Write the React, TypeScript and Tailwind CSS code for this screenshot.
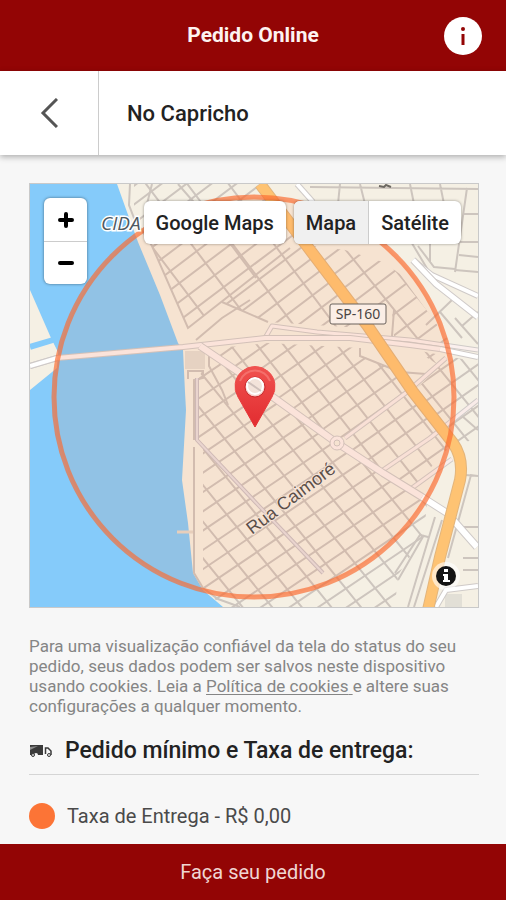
interface StreetLinesProps {
  clip: string;
  angle: number;
  spacing: number;
  offset?: number;
}

/**
 * Parallel side streets, clipped to one neighbourhood
 */
function StreetLines({ clip, angle, spacing, offset = 0 }: StreetLinesProps) {
  const lines = [];
  for (let y = -320; y <= 320; y += spacing) {
    lines.push(`M-400 ${y + offset}H400`);
  }
  return (
    <g clipPath={`url(#${clip})`}>
      <path d={lines.join('')} transform={`translate(300 400) rotate(${angle})`} />
    </g>
  );
}

interface RoadProps {
  d: string;
  width: number;
  casing?: string;
  fill?: string;
}

function Road({ d, width, casing = '#cfcac8', fill = '#ffffff' }: RoadProps) {
  return (
    <g fill="none" strokeLinejoin="round">
      <path d={d} stroke={casing} strokeWidth={width + 2} />
      <path d={d} stroke={fill} strokeWidth={width} />
    </g>
  );
}

function MapCanvas() {
  return (
    <svg
      viewBox="30 184 448 423"
      preserveAspectRatio="xMidYMid slice"
      className="block w-full"
      aria-label="Área de entrega"
      role="img"
    >
      <defs>
        <clipPath id="north">
          <path d="M134 184H262L307 248L362 328L268 322L222 302L188 328L152 246L134 212Z" />
        </clipPath>
        <clipPath id="east">
          <path d="M307 245L345 250L383 262L400 274L452 345L394 336L392 310L374 326Z" />
        </clipPath>
        <clipPath id="center">
          <path d="M268 343L360 348L362 356L400 372L453 443L412 488L383 471L337 443L277 401L210 349Z" />
        </clipPath>
        <clipPath id="south">
          <path d="M210 352L240 374L277 401L337 443L383 473L427 502L424 535L398 575L395 607H225L203 590V440L198 440V380Z" />
        </clipPath>
        <clipPath id="farEast">
          <path d="M415 350L478 362V440L453 443L413 392L440 366Z" />
        </clipPath>
        <linearGradient id="pin" x1="0" y1="0" x2="0" y2="1">
          <stop offset="0" stopColor="#f0524f" />
          <stop offset="1" stopColor="#e22c30" />
        </linearGradient>
      </defs>

      {/* Land and river */}
      <rect x="30" y="184" width="448" height="423" fill="#f5f0e4" />
      <path
        d="M30 184H117L127 212L138 242L160 295L175 335L178 343L183 350L185 392L186 410L182 480L188 523L193 573L203 590L223 607H30V390L57 368L58 352L51 338L30 290Z"
        fill="#85cbfa"
      />
      <path d="M30 347L53 340" stroke="#85cbfa" strokeWidth="6" />
      <path d="M177 532H194" stroke="#e5d8cb" strokeWidth="3" />

      {/* Blocks around the highway exits */}
      <path d="M415 264L432 273L442 288L436 289Z" fill="#dfe1df" />
      <path d="M185 351H205V369H185Z" fill="#e4ddd3" />
      <path d="M445 594H462V607H445Z" fill="#e2dfd6" />

      <g fill="none" stroke="#cdc5be" strokeWidth="2">
        <StreetLines clip="north" angle={-37} spacing={15} offset={4} />
        <StreetLines clip="north" angle={53} spacing={33} offset={16} />
        <StreetLines clip="east" angle={-37} spacing={17} offset={2} />
        <StreetLines clip="east" angle={51} spacing={26} offset={8} />
        <StreetLines clip="center" angle={-35} spacing={17} offset={0} />
        <StreetLines clip="center" angle={52} spacing={21} offset={5} />
        <StreetLines clip="south" angle={-34} spacing={16} offset={6} />
        <StreetLines clip="south" angle={51} spacing={23} offset={12} />
        <StreetLines clip="farEast" angle={-35} spacing={17} offset={2} />
        <StreetLines clip="farEast" angle={51} spacing={23} offset={8} />

        {/* Streets along the shore */}
        <path d="M130 184L129 205L134 218L152 246L188 328L290 248" />
        <path d="M152 184L146 208M178 184L232 246L256 278M196 340L222 318L250 300" />
        <path d="M222 302L268 322M360 348V356L400 372L426 374M394 310L392 336" />
        <path d="M194 447V573L203 588L218 599L240 607" />
        <path d="M188 379V371H203V378L194 380V440M209 350V366L222 390L228 405" />

        {/* North east blocks */}
        <path d="M310 187L478 189M340 184L338 204M360 184L365 204M410 184L414 204M440 184L444 204M467 188L455 272" />
        <path d="M463 214H478M460 242H478M459 255L478 257M455 270L478 272M418 246L434 267L455 269M430 244V262M410 240L428 270" />
        <path d="M426 325L452 300M440 312L462 338M455 318L478 344M462 326L478 312" />

        {/* South east blocks */}
        <path d="M478 430L462 416M465 475L478 476L471 475L448 558M463 527H478M463 558H478M463 570H478" />
        <path d="M435 517L408 607M442 520L414 607M424 535L398 580M395 573L420 535L428 537M427 500L445 512" />
      </g>

      {/* Secondary roads */}
      <Road d="M197 378V440L260 507L323 573" width={2} casing="#c9c0c4" fill="#e7dfe0" />
      <Road d="M297 184L313 202" width={4} />
      <Road d="M413 260L432 275L478 296" width={4} />
      <Road d="M413 260L436 284L478 317" width={5} />
      <Road d="M345 438L407 392L446 358" width={3} fill="#f9ece9" />
      <Road d="M383 470L430 438L478 400" width={3} fill="#f9ece9" />
      <Road d="M412 488L452 459" width={3} fill="#f9ece9" />
      <Road d="M436 607L446 590L478 586" width={4} />
      <Road d="M265 338L272 326L317 332L410 340L478 350" width={3} fill="#fbf0ee" />
      <Road d="M30 366L57 358L183 347L265 338L350 338L410 345L440 349" width={4} fill="#fbf0ee" />
      <Road d="M440 349L478 357" width={4} />
      <Road d="M30 366L57 358" width={4} />
      <Road d="M200 346L240 373L277 400L337 443L383 473L422 497" width={6} fill="#fbf0ee" />
      <Road d="M422 497L447 513L477 547" width={6} />
      <circle cx="337" cy="443" r="7" fill="#fbf0ee" stroke="#cfcac8" />
      <circle cx="337" cy="443" r="3" fill="#f5f0e4" stroke="#cfcac8" />

      {/* Highway */}
      <Road
        d="M260 184L307 246L367 325L413 392L453 443Q464 459 460 480L440 557L428 610"
        width={10}
        casing="#e3b57c"
        fill="#fec373"
      />
      <path d="M379 186L384 187L386 185L391 187" fill="none" stroke="#6b6761" strokeWidth="2" />

      {/* Delivery radius */}
      <circle
        cx="254"
        cy="397"
        r="200"
        fill="#fb7535"
        fillOpacity=".1"
        stroke="#fb6c31"
        strokeOpacity=".68"
        strokeWidth="5"
      />

      {/* Labels */}
      <text
        x="101"
        y="230"
        fontSize="19"
        fontStyle="italic"
        fill="#4f5961"
        stroke="#fff"
        strokeWidth="3"
        paintOrder="stroke"
        fontFamily="'Open Sans', sans-serif"
      >
        CIDA
      </text>
      <rect x="330" y="304" width="56" height="20" rx="2" fill="#fbeee6" stroke="#6b625d" />
      <text x="358" y="319" fontSize="14" textAnchor="middle" fill="#4a4543" fontFamily="'Noto Sans', sans-serif">
        SP-160
      </text>
      <text
        transform="translate(252 535) rotate(-37)"
        fontSize="18"
        fill="#5b4f49"
        stroke="#f8e5d8"
        strokeWidth="2"
        paintOrder="stroke"
        fontFamily="'Liberation Sans', sans-serif"
      >
        Rua Caimoré
      </text>

      {/* Pin */}
      <path d="M255 427L238 397A20 20 0 1 1 272 397Z" fill="url(#pin)" stroke="url(#pin)" strokeLinejoin="round" />
      <circle cx="255" cy="387" r="10" fill="#f6cfc9" stroke="#c9272b" />
      <circle cx="255" cy="386" r="8" fill="#f3e3da" stroke="#ffffff" strokeWidth="2" />
      <path d="M248 382L261 391" stroke="#cfc0bb" strokeWidth="2" />
      <path d="M240 381A16 16 0 0 1 270 381" fill="none" stroke="#f98580" strokeWidth="2" strokeOpacity=".6" />
    </svg>
  );
}

function InfoGlyph() {
  return (
    <svg viewBox="0 0 38 38" className="size-[38px]" aria-hidden="true">
      <circle cx="19" cy="19" r="19" fill="#ffffff" />
      <circle cx="19" cy="12" r="2" fill="#930505" />
      <rect x="17.500" y="17" width="3" height="11" fill="#930505" />
    </svg>
  );
}

function TruckIcon() {
  return (
    <svg viewBox="0 0 24 14" className="h-[14px] w-6 shrink-0" aria-hidden="true">
      <path d="M1 1H14V11H9A2 2 0 0 0 5 11H1Z" fill="#3a3a3a" />
      <path d="M1 3L9 2L1 6Z" fill="#8d8d8d" />
      <circle cx="4" cy="11" r="1.500" fill="#ddd" stroke="#3a3a3a" />
      <path d="M16.500 10V4H19L22 7V11" fill="none" stroke="#3a3a3a" strokeWidth="1.500" />
      <circle cx="20" cy="11" r="1.500" fill="#eee" stroke="#3a3a3a" />
    </svg>
  );
}

export default function App() {
  return (
    <div className="flex min-h-screen flex-col bg-[#f7f7f7] font-[Roboto,sans-serif] text-[#222]">
      {/* Title bar */}
      <header className="grid h-[71px] grid-cols-[1fr_auto_1fr] items-center bg-[#930505] px-6">
        <h1 className="col-start-2 text-[21px] font-bold text-[#fdf3f1]">Pedido Online</h1>
        <button type="button" aria-label="Informações" className="justify-self-end">
          <InfoGlyph />
        </button>
      </header>

      {/* Restaurant bar */}
      <nav className="relative flex h-[84px] items-stretch bg-white shadow-[0_2px_6px_rgba(0,0,0,0.3)]">
        <button
          type="button"
          aria-label="Voltar"
          className="flex w-[99px] items-center justify-center border-r border-[#ccc] text-[#555]"
        >
          <svg viewBox="0 0 18 30" className="h-[30px] w-[18px]" fill="none" stroke="currentColor" strokeWidth="3">
            <path d="M17 1L3 15L17 29" />
          </svg>
        </button>
        <h2 className="flex items-center px-7 text-[22px] font-medium">No Capricho</h2>
      </nav>

      <main className="flex-1 pt-7 pr-[27px] pb-3 pl-[29px]">
        {/* Map */}
        <section className="relative border border-[#c9c9c9]">
          <MapCanvas />
          <div className="absolute inset-x-[14px] top-[14px] flex items-start justify-between text-xl font-medium">
            <div className="flex w-[43px] flex-col overflow-hidden rounded-md bg-white shadow-[0_0_3px_rgba(0,0,0,0.5)]">
              <button type="button" aria-label="Aproximar" className="flex h-[44px] items-center justify-center border-b border-[#ccc]">
                <svg viewBox="0 0 16 16" className="size-4" stroke="#000" strokeWidth="4" strokeLinecap="round">
                  <path d="M2 8H14M8 2V14" />
                </svg>
              </button>
              <button type="button" aria-label="Afastar" className="flex h-[42px] items-center justify-center">
                <svg viewBox="0 0 16 16" className="size-4" stroke="#000" strokeWidth="4" strokeLinecap="round">
                  <path d="M2 8H14" />
                </svg>
              </button>
            </div>
            <div className="flex gap-2 pt-[3px] pr-[3px]">
              <button type="button" className="h-[43px] rounded-md bg-white px-3 shadow-[0_0_3px_rgba(0,0,0,0.4)]">
                Google Maps
              </button>
              <div className="flex h-[43px] overflow-hidden rounded-md bg-white shadow-[0_0_3px_rgba(0,0,0,0.4)]">
                <button type="button" aria-pressed="true" className="border-r border-[#ccc] bg-[#f0f0f0] px-3">
                  Mapa
                </button>
                <button type="button" aria-pressed="false" className="px-3">
                  Satélite
                </button>
              </div>
            </div>
          </div>
          <button type="button" aria-label="Créditos do mapa" className="absolute right-[18px] bottom-[17px] rounded-full bg-white/60 p-1">
            <svg viewBox="0 0 20 20" className="size-5">
              <circle cx="10" cy="10" r="10" fill="#141414" />
              <path d="M8 3H12V6H8ZM7 8H12V14H14V16H7V14H8V10H7Z" fill="#ffffff" />
            </svg>
          </button>
        </section>

        <p className="mt-7 text-[17px] leading-5 text-[#858585]">
          Para uma visualização confiável da tela do status do seu pedido, seus dados podem ser salvos
          neste dispositivo usando cookies. Leia a{' '}
          <a href="#cookies" className="underline underline-offset-2">
            Política de cookies{' '}
          </a>
          e altere suas configurações a qualquer momento.
        </p>

        {/* Delivery fees */}
        <h3 className="mt-5 flex items-center gap-3 border-b border-[#d5d5d5] pb-2 text-[23px] leading-[30px] font-medium">
          <TruckIcon />
          Pedido mínimo e Taxa de entrega:
        </h3>
        <div className="mt-7 flex items-center gap-3 text-xl leading-[26px] text-[#4a4a4a]">
          <span className="size-[26px] rounded-full bg-[#fc7436]" />
          Taxa de Entrega - R$ 0,00
        </div>
      </main>

      <button type="button" className="sticky bottom-0 h-14 w-full bg-[#930505] text-xl text-[#f0d6d3]">
        Faça seu pedido
      </button>
    </div>
  );
}
